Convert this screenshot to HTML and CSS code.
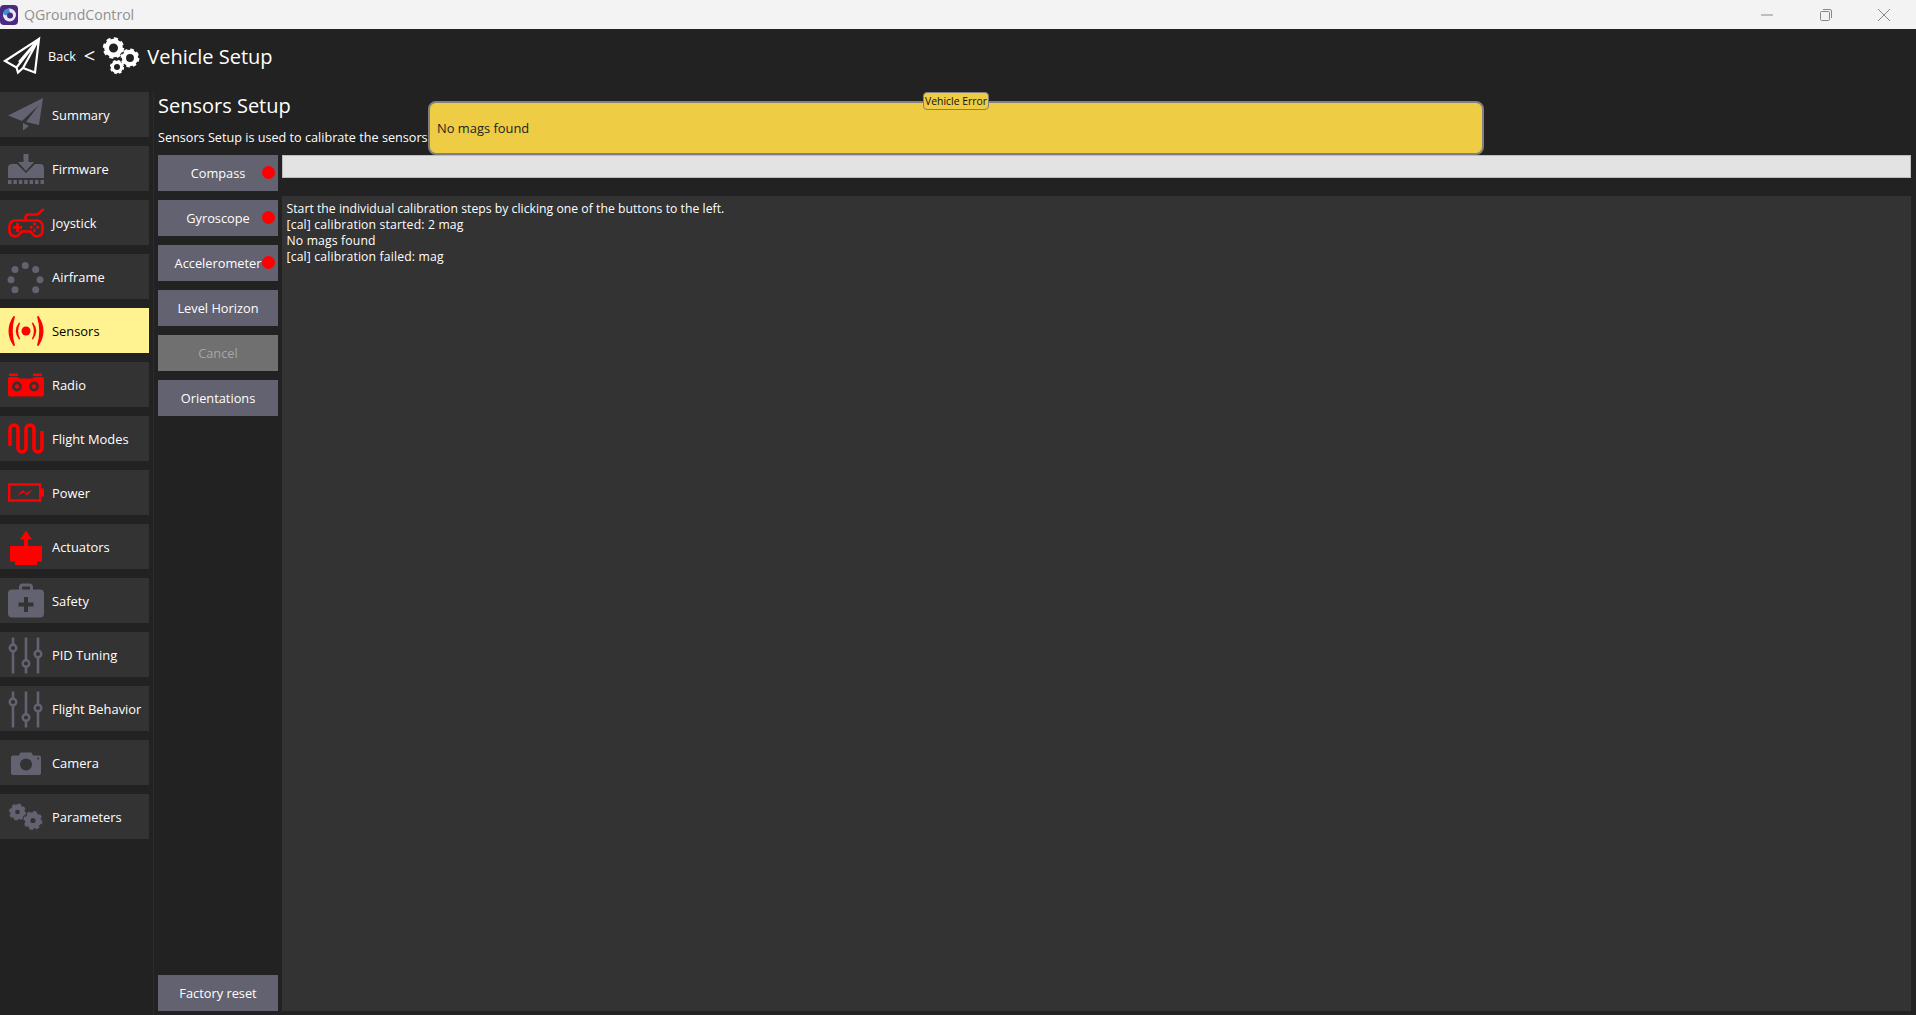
FILE: index.html
```html
<!DOCTYPE html>
<html lang="en">
<head>
<meta charset="utf-8">
<title>QGroundControl</title>
<link rel="stylesheet" href="styles.css">
</head>
<body>
<svg class="defs" width="0" height="0" aria-hidden="true">
  <defs>
    <g id="gear">
      <circle r="6.6" fill="none" stroke="currentColor" stroke-width="4.6"/>
      <circle r="8.9" fill="none" stroke="currentColor" stroke-width="2.6" stroke-dasharray="3.9 3.09"/>
    </g>
    <g id="gear-solid">
      <circle r="5.400" fill="none" stroke="currentColor" stroke-width="5.600"/>
      <circle r="8.300" fill="none" stroke="currentColor" stroke-width="2.400" stroke-dasharray="3.6 2.92"/>
    </g>
  </defs>
</svg>
<div class="app">
  <header class="titlebar">
    <svg class="appicon" viewBox="0 0 18 20"><rect width="18" height="20" rx="4" fill="#4b2a86"/><circle cx="9.500" cy="10" r="6.500" fill="#e8e8f0"/><path d="M3 9a6.500 6.500 0 0 1 6-5.500l1 4-4 3z" fill="#3f8fd0"/><circle cx="10" cy="10.500" r="3" fill="#4b2a86"/></svg>
    <span class="apptitle">QGroundControl</span>
    <div class="winctl">
      <svg viewBox="0 0 12 12"><path d="M0 6h12" stroke="#888" fill="none"/></svg>
      <svg viewBox="0 0 12 12"><path d="M.5 3.500a1 1 0 0 1 1-1h7a1 1 0 0 1 1 1v7a1 1 0 0 1-1 1h-7a1 1 0 0 1-1-1zM3 .5h7a1.500 1.500 0 0 1 1.500 1.500v7" stroke="#888" fill="none"/></svg>
      <svg viewBox="0 0 12 12"><path d="M0 0l12 12M12 0L0 12" stroke="#888" fill="none"/></svg>
    </div>
  </header>

  <div class="toolbar">
    <svg class="ic36" viewBox="0 0 36 36"><path d="M35 .8L1 23l11.500 6.500L14 34.500l5-4.500 12 4.500zM35 .8L12.500 29.500M35 .8L19 30M35 .8L15 24" fill="none" stroke="#fff" stroke-width="2.200" stroke-linejoin="miter"/></svg>
    <span class="back">Back</span>
    <span class="chev">&lt;</span>
    <svg class="ic36 gears" viewBox="0 0 36 36"><use href="#gear" transform="translate(10.500 10) scale(1.050)"/><use href="#gear" transform="translate(27 20) scale(.92)"/><use href="#gear" transform="translate(14 29) scale(.7)"/></svg>
    <span class="vtitle">Vehicle Setup</span>
  </div>

  <div class="body">
    <nav class="sidebar">
      <a class="item"><svg class="ic36 grey" viewBox="0 0 36 36"><path d="M35 1L0 18.500l14 5.500L31 8 18 25l13 3z"/><path d="M15 26v7.500l6-4.500z"/></svg>Summary</a>
      <a class="item"><svg class="ic36 grey" viewBox="0 0 36 36"><path d="M15.500 3h5v8H26l-8 9-8-9h5.500z"/><path d="M0 27V17a4 4 0 0 1 4-4h5l9 9 9-9h5a4 4 0 0 1 4 4v10z"/><path d="M0 29h3.500v4H0zM5.400 29h3.500v4H5.400zM10.800 29h3.500v4h-3.500zM16.200 29h3.500v4h-3.500zM21.600 29h3.500v4h-3.500zM27 29h3.500v4H27zM32.500 29H36v4h-3.500z"/></svg>Firmware</a>
      <a class="item"><svg class="ic36 red" viewBox="0 0 36 36"><path class="ln joy" d="M7 15.500h22a5.500 5.500 0 0 1 5.500 5.500v5a5.500 5.500 0 0 1-10 3l-2-2.500h-9l-2 2.500a5.500 5.500 0 0 1-10-3v-5A5.500 5.500 0 0 1 7 15.500z"/><path class="ln joy" d="M17.500 15v-2.500a3 3 0 0 1 3-3h8c3.500 0 3.500-4.500 7.500-5"/><path d="M5 21h9v2.800H5zM8.100 18h2.800v9H8.100z"/><circle cx="26.500" cy="19" r="1.500"/><circle cx="26.500" cy="25.500" r="1.500"/><circle cx="23.300" cy="22.300" r="1.500"/><circle cx="29.700" cy="22.300" r="1.500"/></svg>Joystick</a>
      <a class="item"><svg class="ic36 grey" viewBox="0 0 36 36"><circle cx="17.300" cy="6.500" r="3.500"/><circle cx="27.700" cy="10.500" r="3.500"/><circle cx="32" cy="20.800" r="3.500"/><circle cx="27.700" cy="30.800" r="3.500"/><circle cx="7" cy="30.800" r="3.500"/><circle cx="3" cy="20.800" r="3.500"/><circle cx="7" cy="10.500" r="3.500"/></svg>Airframe</a>
      <a class="item active"><svg class="ic36 red" viewBox="0 0 36 36"><circle cx="18" cy="18" r="4.500"/><path d="M5.500 3Q-4.500 18 5.500 33l1.500-.5Q2.500 18 7 3.500z"/><path d="M11 9.500Q4.500 18 11 26.500l1.200-.5Q8 18 12.200 10z"/><path d="M30.500 3q10 15 0 30l-1.500-.5Q33.500 18 29 3.500z"/><path d="M25 9.500q6.500 8.500 0 17l-1.200-.5Q28 18 23.800 10z"/></svg>Sensors</a>
      <a class="item"><svg class="ic36 red" viewBox="0 0 36 36"><path d="M1 6.500h9V9H1zM25 6.500h9V9h-9z"/><path d="M2 10h7l3 1.500h12l3-1.500h7a2 2 0 0 1 2 2v15.500a2 2 0 0 1-2 2H2a2 2 0 0 1-2-2V12a2 2 0 0 1 2-2z"/><circle cx="9" cy="19.500" r="3.600" fill="none" stroke="#333" stroke-width="2.600"/><circle cx="26" cy="19.500" r="3.600" fill="none" stroke="#333" stroke-width="2.600"/></svg>Radio</a>
      <a class="item"><svg class="ic36 red" viewBox="0 0 36 36"><path class="ln thick" d="M2 25V8a4 4 0 0 1 8 0v19a4 4 0 0 0 8 0V8a4 4 0 0 1 8 0v19a4 4 0 0 0 8 0V10"/></svg>Flight Modes</a>
      <a class="item"><svg class="ic36 red" viewBox="0 0 36 36"><rect class="ln bat" x="1.200" y="9.500" width="31" height="16"/><rect x="33" y="13.500" width="3" height="8"/><path d="M9 20.800l6-5.800 3 3.200 7-4-6 6.300-3-3.200z"/></svg>Power</a>
      <a class="item"><svg class="ic36 red" viewBox="0 0 36 36"><path d="M18 1.500l6 9h-4V17h14v15.500h-5V36H7v-3.500H2V17h14v-6.500h-4z"/></svg>Actuators</a>
      <a class="item"><svg class="ic36 grey" viewBox="0 0 36 36"><path d="M12.500 8V4a2 2 0 0 1 2-2h7a2 2 0 0 1 2 2v4" fill="none" stroke="#626270" stroke-width="3"/><rect y="6.500" width="36" height="28" rx="4"/><path d="M16 14h4v5.500h5.500v4H20V29h-4v-5.500h-5.500v-4H16z" fill="#333"/></svg>Safety</a>
      <a class="item"><svg class="ic36 sliders" viewBox="0 0 36 36"><path d="M5 .5v36M18 .5v36M30 .5v36"/><circle cx="5" cy="11" r="3.300"/><circle cx="18" cy="26.500" r="3.300"/><circle cx="30" cy="17" r="3.300"/></svg>PID Tuning</a>
      <a class="item"><svg class="ic36 sliders" viewBox="0 0 36 36"><path d="M5 .5v36M18 .5v36M30 .5v36"/><circle cx="5" cy="11" r="3.300"/><circle cx="18" cy="26.500" r="3.300"/><circle cx="30" cy="17" r="3.300"/></svg>Flight Behavior</a>
      <a class="item"><svg class="ic36 grey" viewBox="0 0 36 36"><path d="M5 10.500h6l1.500-3h11l1.500 3h6a2 2 0 0 1 2 2V28a2 2 0 0 1-2 2H5a2 2 0 0 1-2-2V12.500a2 2 0 0 1 2-2z"/><circle cx="18" cy="19.500" r="6" fill="#333"/><circle cx="30" cy="13.500" r="1" fill="#333"/></svg>Camera</a>
      <a class="item"><svg class="ic36 param" viewBox="0 0 36 36"><use href="#gear-solid" transform="translate(9.500 13) scale(.9)"/><use href="#gear-solid" transform="translate(25 21.500) scale(1)"/></svg>Parameters</a>
    </nav>

    <main class="content">
      <h1 class="heading">Sensors Setup</h1>
      <p class="intro">Sensors Setup is used to calibrate the sensors</p>
      <div class="panel">
        <div class="buttons">
          <button class="btn">Compass<i class="dot"></i></button>
          <button class="btn">Gyroscope<i class="dot"></i></button>
          <button class="btn">Accelerometer<i class="dot"></i></button>
          <button class="btn">Level Horizon</button>
          <button class="btn off">Cancel</button>
          <button class="btn">Orientations</button>
          <button class="btn last">Factory reset</button>
        </div>
        <div class="right">
          <div class="progress"></div>
          <div class="log">
            <div class="first">Start the individual calibration steps by clicking one of the buttons to the left.</div>
            <div>[cal] calibration started: 2 mag</div>
            <div>No mags found</div>
            <div>[cal] calibration failed: mag</div>
          </div>
        </div>
      </div>
    </main>
  </div>

  <div class="popup">
    <span class="chip">Vehicle Error</span>
    No mags found
  </div>
</div>
</body>
</html>
```
FILE: styles.css
```css
* { box-sizing: border-box; }
html, body { margin: 0; padding: 0; height: 100%; overflow: hidden; }
body { font-family: "Open Sans", "Noto Sans", sans-serif; font-size: 12.9px; color: #fff; background: #222; }
.defs { position: absolute; }

.app { position: relative; width: 1916px; height: 1015px; display: flex; flex-direction: column; }

.titlebar { height: 29px; flex: none; background: #f3f3f3; display: flex; align-items: center; }
.appicon { width: 18px; height: 20px; flex: none; }
.apptitle { margin-left: 6px; font-size: 14.100px; color: #8f8f8f; }
.winctl { margin-left: auto; display: flex; gap: 46.500px; padding-right: 26px; }
.winctl svg { width: 12px; height: 12px; display: block; }

.toolbar { height: 63px; flex: none; display: flex; align-items: center; padding: 0 0 9px 4px; }
.ic36 { width: 36px; height: 36px; flex: none; display: block; overflow: visible; }
.back { margin-left: 8px; font-size: 12.600px; }
.chev { margin-left: 8px; font-size: 20px; line-height: 1; }
.gears { margin-left: 8px; color: #fff; }
.vtitle { margin-left: 8px; font-size: 20px; }

.body { flex: 1; min-height: 0; display: flex; }

.sidebar { width: 154px; flex: none; display: flex; flex-direction: column; gap: 9px; border-right: 1px solid #2c2c2c; padding-right: 4px; }
.item { height: 45px; width: 149px; flex: none; display: flex; align-items: center; gap: 8px; padding-left: 8px; background: #333; color: #fff; }
.item.active { background: #fff291; color: #000; }
.grey { fill: #626270; }
.red { fill: #f00; }
.param { color: #626270; }
.ln { fill: none; stroke: #f00; stroke-width: 2; }
.joy { stroke-width: 2.600; }
.bat { stroke-width: 2.400; }
.thick { stroke-width: 3.600; }
.sliders path { fill: none; stroke: #626270; stroke-width: 2.600; }
.sliders circle { fill: #333; stroke: #626270; stroke-width: 2.400; }

.content { flex: 1; min-width: 0; display: flex; flex-direction: column; padding: 0 5px 4px 4px; }
.heading { margin: 0; height: 28px; font-size: 20px; font-weight: 400; line-height: 28px; }
.intro { margin: 8px 0 0; height: 27px; font-size: 12.650px; line-height: 18px; white-space: nowrap; }
.panel { flex: 1; min-height: 0; display: flex; gap: 4px; }

.buttons { width: 120px; flex: none; display: flex; flex-direction: column; gap: 9px; }
.btn { position: relative; height: 36px; width: 120px; flex: none; padding: 0; border: 0; background: #626270; color: #fff; font: 12.800px "Open Sans", "Noto Sans", sans-serif; }
.btn.off { background: #707070; color: #a6a6a6; }
.btn.last { margin-top: auto; }
.dot { position: absolute; left: 104px; top: 11px; width: 13px; height: 13px; border-radius: 50%; background: #f00; }

.right { flex: 1; min-width: 0; display: flex; flex-direction: column; gap: 18px; }
.progress { height: 23px; flex: none; background: #e3e3e3; border: 1px solid #bdbdbd; }
.log { flex: 1; min-height: 0; background: #333; padding: 5px 4.500px; font-size: 12.200px; line-height: 16px; letter-spacing: .16px; }
.log .first { letter-spacing: .03px; }

.popup { position: absolute; left: 428px; top: 101px; width: 1056px; height: 54px; padding-left: 7px; display: flex; align-items: center; background: #eecc44; border: 2px solid #808080; border-radius: 8px; color: #222; }
.chip { position: absolute; left: 493px; top: -11px; width: 66px; height: 18px; display: flex; align-items: center; justify-content: center; background: #eecc44; border: 1px solid #808080; border-radius: 4px; color: #111; font-size: 10.400px; white-space: nowrap; }
```
